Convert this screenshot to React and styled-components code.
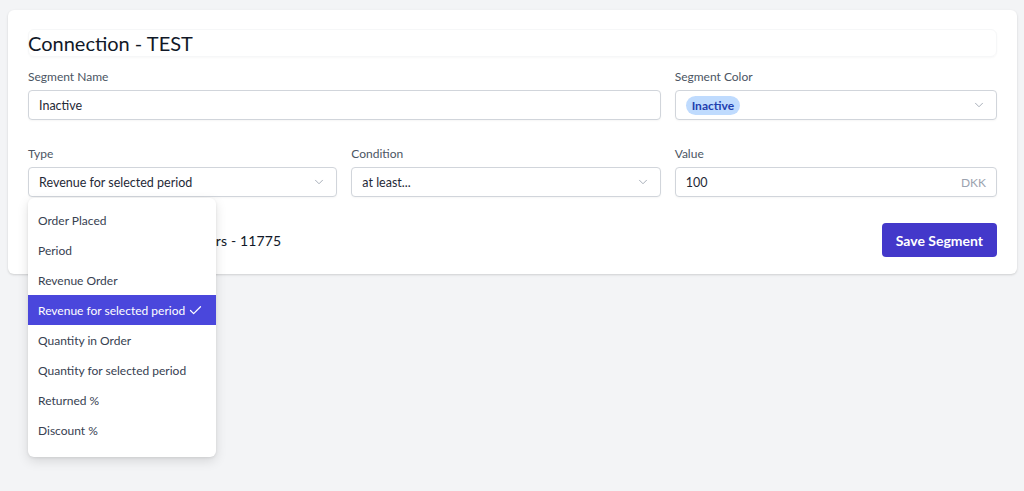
import React from "react";
import styled, { createGlobalStyle } from "styled-components";
import { ChevronDown, Check } from "lucide-react";

const GlobalStyle = createGlobalStyle`
  * { box-sizing: border-box; }
  body {
    margin: 0;
    background: #f3f4f6;
    font-family: "Lato", "Noto Sans", sans-serif;
    color: #1f2937;
  }
`;

const Page = styled.div`
  padding: 10px 7px 0 8px;
  min-height: 491px;
`;

const Card = styled.div`
  position: relative;
  background: #fff;
  border-radius: 6px;
  box-shadow: 0 1px 3px rgba(0, 0, 0, 0.1), 0 1px 2px rgba(0, 0, 0, 0.06);
  padding: 19px 20px 17px;
`;

const TitleBox = styled.div`
  height: 28px;
  display: flex;
  align-items: center;
  border: 1px solid #f6f7f8;
  border-radius: 6px;
  box-shadow: 0 1px 2px rgba(0, 0, 0, 0.03);
  margin-bottom: 12px;
`;

const Title = styled.h1`
  margin: 0 0 0 -1px;
  font-size: 20px;
  font-weight: 400;
  color: #111827;
`;

const Grid = styled.div`
  display: grid;
  grid-template-columns: minmax(0, 309fr) minmax(0, 309fr) minmax(0, 322fr);
  column-gap: 14px;
  row-gap: 26px;
`;

const Field = styled.div`
  grid-column: span ${(p) => p.span || 1};
  display: flex;
  flex-direction: column;
  gap: 5px;
  position: relative;
`;

const Label = styled.label`
  font-size: 12px;
  line-height: 16px;
  color: #4b5563;
`;

const Control = styled.div`
  height: 30px;
  border: 1px solid #d1d5db;
  border-radius: 4px;
  background: #fff;
  display: flex;
  align-items: center;
  justify-content: space-between;
  padding: 0 10px;
  font-size: 12.5px;
  color: #1f2937;
  white-space: nowrap;
  box-shadow: 0 1px 2px rgba(0, 0, 0, 0.04);
`;

const Suffix = styled.span`
  font-size: 12px;
  color: #9ca3af;
`;

const Badge = styled.span`
  background: #bfdbfe;
  color: #1e40af;
  font-size: 12px;
  font-weight: 700;
  padding: 2px 6px;
  border-radius: 10px;
`;

const Footer = styled.div`
  display: flex;
  align-items: center;
  justify-content: space-between;
  margin-top: 26px;
`;

const Count = styled.span`
  font-size: 14px;
  color: #111827;
  letter-spacing: 0.15px;
`;

const Button = styled.button`
  height: 34px;
  padding: 0 14px;
  border: none;
  border-radius: 4px;
  background: #4338ca;
  color: #fff;
  font-family: inherit;
  font-size: 14px;
  font-weight: 700;
`;

const Menu = styled.ul`
  position: absolute;
  top: 100%;
  left: 0;
  margin: 1px 0 0;
  width: 188px;
  list-style: none;
  padding: 7px 0 12px;
  background: #fff;
  border-radius: 6px;
  box-shadow: 0 4px 12px rgba(0, 0, 0, 0.12), 0 1px 3px rgba(0, 0, 0, 0.08);
  z-index: 10;
`;

const Item = styled.li`
  height: 30px;
  display: flex;
  align-items: center;
  gap: 3px;
  padding: 0 10px;
  font-size: 12px;
  white-space: nowrap;
  color: ${(p) => (p.active ? "#fff" : "#374151")};
  background: ${(p) => (p.active ? "#4a47dc" : "transparent")};
`;

const options = [
  "Order Placed",
  "Period",
  "Revenue Order",
  "Revenue for selected period",
  "Quantity in Order",
  "Quantity for selected period",
  "Returned %",
  "Discount %",
];

const Chevron = () => <ChevronDown size={14} color="#9ca3af" strokeWidth={1.5} />;

export default function App() {
  return (
    <Page>
      <GlobalStyle />
      <Card>
        <TitleBox>
          <Title>Connection - TEST</Title>
        </TitleBox>
        <Grid>
          <Field span={2}>
            <Label>Segment Name</Label>
            <Control>Inactive</Control>
          </Field>
          <Field>
            <Label>Segment Color</Label>
            <Control>
              <Badge>Inactive</Badge>
              <Chevron />
            </Control>
          </Field>
          <Field>
            <Label>Type</Label>
            <Control>
              Revenue for selected period
              <Chevron />
            </Control>
            <Menu>
              {options.map((o) => (
                <Item key={o} active={o === "Revenue for selected period"}>
                  {o}
                  {o === "Revenue for selected period" && (
                    <Check size={15} color="#fff" strokeWidth={2} />
                  )}
                </Item>
              ))}
            </Menu>
          </Field>
          <Field>
            <Label>Condition</Label>
            <Control>
              at least...
              <Chevron />
            </Control>
          </Field>
          <Field>
            <Label>Value</Label>
            <Control>
              100
              <Suffix>DKK</Suffix>
            </Control>
          </Field>
        </Grid>
        <Footer>
          <Count>Estimated number of customers - 11775</Count>
          <Button>Save Segment</Button>
        </Footer>
      </Card>
    </Page>
  );
}
